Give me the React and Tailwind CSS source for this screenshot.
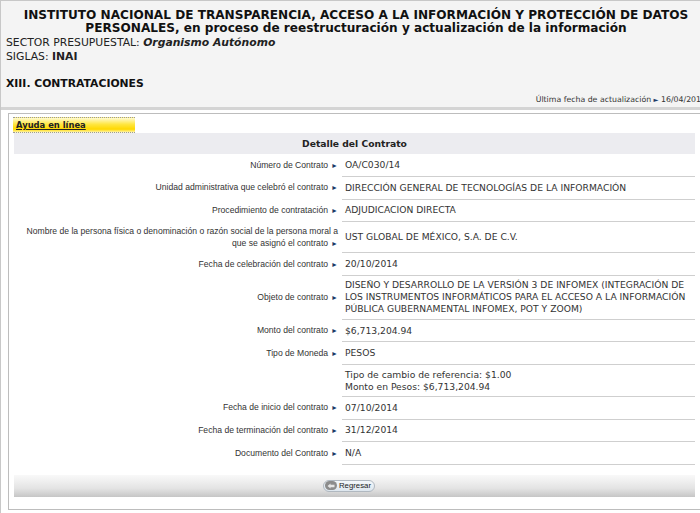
import React from "react";

const rows = [
  { label: "Número de Contrato", value: ["OA/C030/14"] },
  { label: "Unidad administrativa que celebró el contrato", value: ["DIRECCIÓN GENERAL DE TECNOLOGÍAS DE LA INFORMACIÓN"] },
  { label: "Procedimiento de contratación", value: ["ADJUDICACION DIRECTA"] },
  {
    label: "Nombre de la persona física o denominación o razón social de la persona moral a que se asignó el contrato",
    value: ["UST GLOBAL DE MÉXICO, S.A. DE C.V."],
  },
  { label: "Fecha de celebración del contrato", value: ["20/10/2014"] },
  {
    label: "Objeto de contrato",
    value: [
      "DISEÑO Y DESARROLLO DE LA VERSIÓN 3 DE INFOMEX (INTEGRACIÓN DE LOS INSTRUMENTOS INFORMÁTICOS PARA EL ACCESO A LA INFORMACIÓN PÚBLICA GUBERNAMENTAL INFOMEX, POT Y ZOOM)",
    ],
  },
  { label: "Monto del contrato", value: ["$6,713,204.94"] },
  { label: "Tipo de Moneda", value: ["PESOS"] },
  { label: "", value: ["Tipo de cambio de referencia: $1.00", "Monto en Pesos: $6,713,204.94"] },
  { label: "Fecha de inicio del contrato", value: ["07/10/2014"] },
  { label: "Fecha de terminación del contrato", value: ["31/12/2014"] },
  { label: "Documento del Contrato", value: ["N/A"] },
];

function Arrow() {
  return <span className="ml-[3px] text-[7px] text-[#1b3b66]">►</span>;
}

export default function App() {
  return (
    <div className="h-[513px] w-[700px] overflow-hidden bg-white font-['DejaVu_Sans',Verdana,sans-serif] text-[#222]">
      <div className="min-h-[513px] w-[712px] border-l border-t border-[#c8c8c8]">
        {/* encabezado */}
        <div className="w-[710px] border-b-[3px] border-[#d4d4d4] bg-[#f4f4f4] pb-[1px] pl-[5px] pr-[5px] pt-[8px]">
          <h1 className="text-center text-[12.1px] font-bold leading-[13px] text-[#111]">
            INSTITUTO NACIONAL DE TRANSPARENCIA, ACCESO A LA INFORMACIÓN Y PROTECCIÓN DE DATOS PERSONALES, en proceso de reestructuración y actualización de la información
          </h1>
          <p className="mt-[1px] text-[10.8px] leading-[14px] text-[#222]">
            SECTOR PRESUPUESTAL: <b className="italic">Organismo Autónomo</b>
          </p>
          <p className="text-[10.8px] leading-[14px] text-[#222]">
            SIGLAS: <b>INAI</b>
          </p>
          <p className="mt-[13px] text-[10.8px] font-bold leading-[14px] text-[#111]">XIII. CONTRATACIONES</p>
          <p className="mt-[3px] text-right text-[7.8px] leading-[12px] text-[#333]">
            Última fecha de actualización <span className="text-[6.5px] text-[#1b3b66]">►</span> 16/04/2015
          </p>
        </div>

        {/* contenido */}
        <div className="ml-[7px] mt-[3px] w-[697px] border border-[#bdbdbd] pb-[12px] pl-[5px] pr-[9px] pt-[3px]">
          <div className="ml-[-1px] w-[122px] border-y border-dotted border-[#9a9a9a] bg-[linear-gradient(#fffbd0,#ffe640_45%,#ffd800_80%,#fff3a0)] px-[3px] text-[8.4px] font-bold leading-[14px] text-[#222] underline">
            Ayuda en línea
          </div>

          <table className="w-full">
            <thead>
              <tr>
                <th colSpan={2} className="h-[21px] bg-[#ececf0] text-center align-middle text-[9.2px] font-bold text-[#222]">
                  Detalle del Contrato
                </th>
              </tr>
            </thead>
            <tbody>
              {rows.map((row, i) => (
                <tr key={i}>
                  <td className="h-[22.6px] w-[328px] py-[3px] pl-[4px] pr-[4px] text-right align-middle font-['Liberation_Sans',Arial,sans-serif] text-[8.6px] leading-[12px] text-[#333]">
                    {row.label ? (
                      <>
                        {row.label}
                        <Arrow />
                      </>
                    ) : null}
                  </td>
                  <td className="h-[22.6px] border-b border-[#cfcfcf] py-[3.5px] pl-[3px] pr-[6px] align-middle text-[9.2px] leading-[12px] text-[#333]">
                    {row.value.map((v) => (
                      <div key={v}>{v}</div>
                    ))}
                  </td>
                </tr>
              ))}
            </tbody>
          </table>

          <div className="mt-[10px] flex h-[22px] items-start justify-center bg-[linear-gradient(#f9f9f9,#e4e4e4_60%,#c6c6c6)] pt-[5px]">
            <button
              type="button"
              className="ml-[-11px] flex h-[12px] items-center gap-[2px] rounded-full border border-[#b0b8c0] bg-[linear-gradient(#f4f8fb,#dde6ee)] pl-[1px] pr-[3px] font-['Liberation_Sans',Arial,sans-serif] text-[7.8px] leading-none text-[#222]"
            >
              <span className="flex h-[9px] w-[12px] items-center justify-center rounded-full bg-[#8c8c8c]">
                <svg width="8" height="6" viewBox="0 0 8 6" aria-hidden="true">
                  <path d="M0.5 3L3.5 0.5V1.8H7.5V4.2H3.5V5.5Z" fill="#e6e6e6" />
                </svg>
              </span>
              Regresar
            </button>
          </div>
        </div>
      </div>
    </div>
  );
}
